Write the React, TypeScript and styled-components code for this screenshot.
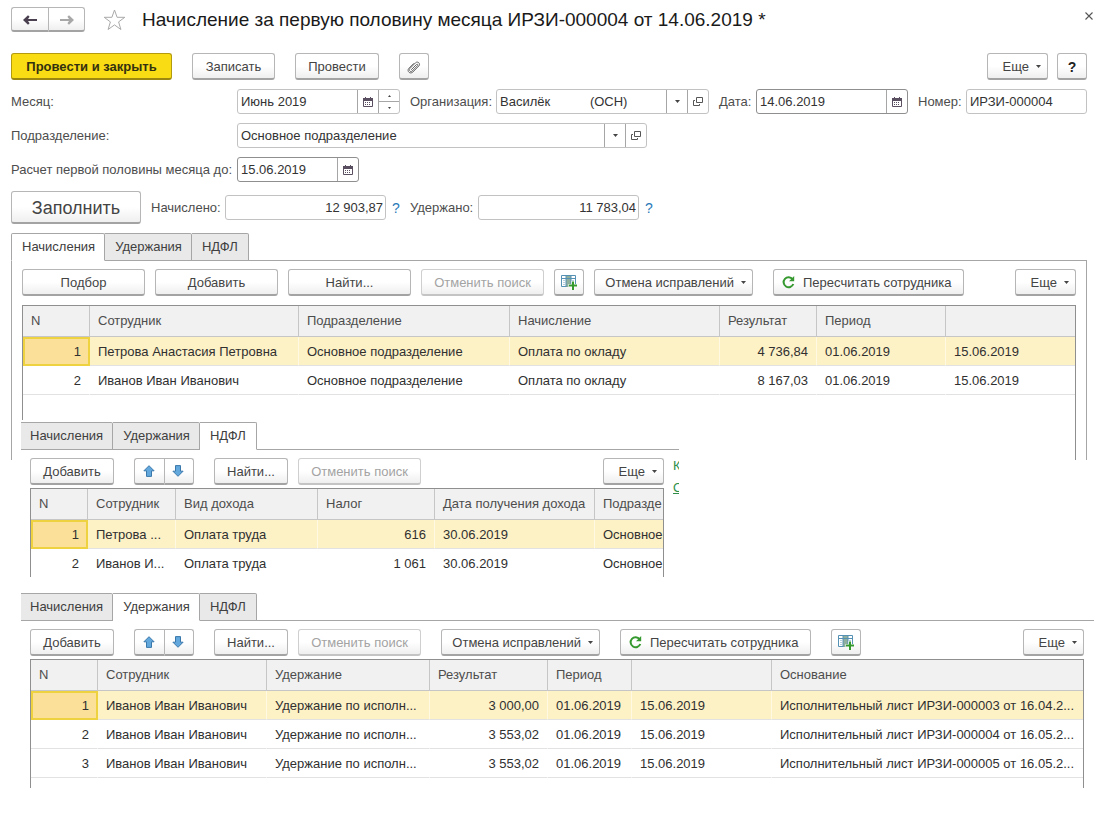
import React from "react";
import styled, { createGlobalStyle, css } from "styled-components";

const GlobalStyle = createGlobalStyle`
  *, *::before, *::after { box-sizing: border-box; }
  body {
    margin: 0;
    background: #fff;
    color: #404040;
    font: 13px/16px "Liberation Sans", Arial, sans-serif;
  }
  button, input { font: inherit; color: inherit; }
`;

const line = "#a6a6a6";

const Page = styled.main`
  padding-top: 7px;
`;

const Header = styled.header`
  display: flex;
  align-items: center;
  height: 25px;
  margin: 0 2px 21px 11px;
`;

const Title = styled.h1`
  margin: 0 auto 0 16px;
  font-size: 19px;
  line-height: 24px;
  font-weight: 400;
  color: #1a1a1a;
  white-space: nowrap;
`;

const PlainButton = styled.button`
  display: flex;
  align-items: center;
  justify-content: center;
  padding: 0;
  border: 0;
  background: none;
`;

const StarButton = styled(PlainButton)`
  margin-left: 18px;
`;

const CloseButton = styled(PlainButton)`
  align-self: flex-start;
  padding-top: 5px;
`;

const Button = styled.button<{ $width?: number; $tone?: "primary" | "large" }>`
  display: flex;
  align-items: center;
  justify-content: center;
  flex: none;
  width: ${(p) => (p.$width ? `${p.$width}px` : "auto")};
  height: 27px;
  padding: 1px 0 0;
  border: 1px solid #b6b6b6;
  border-bottom: 2px solid #a3a3a3;
  border-radius: 3px;
  background: linear-gradient(#fff 50%, #efefef);
  color: #444;
  white-space: nowrap;
  &:disabled {
    color: #a3a3a3;
    border-color: #cfcfcf;
    border-bottom-color: #c4c4c4;
  }
  ${(p) =>
    p.$tone === "primary" &&
    css`
      background: #f9dc14;
      border-color: #b39b10;
      border-bottom-color: #9c8710;
      color: #33300f;
      font-weight: 700;
    `}
  ${(p) =>
    p.$tone === "large" &&
    css`
      height: 33px;
      font-size: 18px;
    `}
`;

const HelpButton = styled(Button)`
  font-weight: 700;
  font-size: 14px;
  color: #222;
`;

const MenuButton = styled(Button)`
  justify-content: flex-end;
  gap: 7px;
  padding-right: 6px;
`;

const IconTextButton = styled(Button)`
  justify-content: flex-start;
  gap: 8px;
  padding-left: 8px;
`;

const ButtonPair = styled.div`
  display: flex;
  button:first-child {
    border-radius: 3px 0 0 3px;
    border-right-width: 0;
  }
  button:last-child {
    border-radius: 0 3px 3px 0;
  }
`;

const NavPair = styled(ButtonPair)`
  button { height: 25px; }
`;

const MovePair = styled(ButtonPair)`
  button { padding: 0 2px 0 0; }
`;

const Form = styled.form`
  display: flex;
  flex-direction: column;
  gap: 9px;
  margin: 0 8px 9px 11px;
`;

const Row = styled.div`
  display: flex;
  align-items: center;
`;

const Bar = styled.div`
  display: flex;
  gap: 20px;
`;

const Group = styled.div<{ $end?: boolean }>`
  display: flex;
  gap: ${(p) => (p.$end ? 9 : 10)}px;
  margin-left: ${(p) => (p.$end ? "auto" : "0")};
`;

const Label = styled.label<{ $width: number; $gap?: boolean }>`
  flex: none;
  width: ${(p) => p.$width}px;
  margin-left: ${(p) => (p.$gap ? 10 : 0)}px;
  color: #4d4d4d;
  white-space: nowrap;
`;

const Field = styled.div<{ $width?: number; $strong?: boolean }>`
  display: flex;
  flex: ${(p) => (p.$width ? "none" : "1")};
  width: ${(p) => (p.$width ? `${p.$width}px` : "auto")};
  min-width: 0;
  height: 25px;
  border: 1px solid ${(p) => (p.$strong ? "#8f8f8f" : "#c2c2c2")};
  border-radius: 3px;
  background: #fff;
`;

const Input = styled.input<{ $right?: boolean }>`
  flex: 1;
  min-width: 0;
  padding: 0 2px 0 3px;
  border: 0;
  border-radius: 3px;
  outline: 0;
  background: transparent;
  color: #333;
  text-align: ${(p) => (p.$right ? "right" : "left")};
`;

const FieldButton = styled(PlainButton)`
  flex: none;
  width: 21px;
  border-left: 1px solid ${line};
`;

const Spinner = styled.div`
  display: flex;
  flex-direction: column;
  width: 21px;
  border-left: 1px solid ${line};
  button {
    flex: 1;
  }
  button:first-child {
    border-bottom: 1px solid ${line};
  }
`;

const Hint = styled.a`
  width: 24px;
  padding-left: 6px;
  color: #2a7ab8;
  font-size: 14px;
  text-decoration: none;
`;

const Tabs = styled.div`
  display: flex;
  height: 28px;
  &::after {
    content: "";
    flex: 1;
    border-bottom: 1px solid ${line};
  }
`;

const Tab = styled.button<{ $active: boolean; $open: boolean }>`
  padding: 0 9px 0 10px;
  border: 1px solid ${line};
  border-left-width: 0;
  border-radius: 0 2px 0 0;
  background: #e9e9e9;
  color: #404040;
  &:first-child {
    padding-left: ${(p) => (p.$open ? 9 : 10)}px;
    border-left-width: ${(p) => (p.$open ? 0 : 1)}px;
    border-radius: ${(p) => (p.$open ? "0 2px 0 0" : "2px 2px 0 0")};
  }
  &:last-child {
    padding-right: 10px;
  }
  ${(p) =>
    p.$active &&
    css`
      background: #fff;
      border-bottom-color: #fff;
    `}
`;

const AccrualSection = styled.section`
  margin: 0 8px 0 11px;
`;

const AccrualPanel = styled.div`
  display: flex;
  flex-direction: column;
  gap: 9px;
  min-height: 199px;
  padding: 8px 10px 0;
  border: solid ${line};
  border-width: 0 1px;
`;

/* The tax fragment is laid over the lower left part of the accruals panel. */
const TaxSection = styled.section`
  position: relative;
  width: 658px;
  max-width: 100%;
  margin: -40px 0 16px 21px;
  padding-top: 2px;
  background: #fff;
`;

const TaxBody = styled.div`
  display: flex;
  gap: 9px;
  padding: 8px 0 0 9px;
`;

const Stack = styled.div`
  display: flex;
  flex: 1;
  flex-direction: column;
  gap: 3px;
  min-width: 0;
`;

const SideLinks = styled.nav`
  display: flex;
  flex: none;
  flex-direction: column;
  gap: 6px;
  width: 6px;
  overflow: hidden;
  a {
    color: #2f8f4a;
    text-decoration: none;
  }
  a:last-child {
    text-decoration: underline;
  }
`;

const DeductionSection = styled.section`
  margin: 0 1px 29px 21px;
`;

const DeductionBody = styled(Stack)`
  padding: 8px 10px 0 9px;
`;

const TableFrame = styled.div<{ $tail: number }>`
  flex: 1;
  padding-bottom: ${(p) => p.$tail}px;
  border: solid #8f8f8f;
  border-width: 1px 1px 0;
`;

const Table = styled.table<{ $cropped?: boolean }>`
  width: 100%;
  table-layout: fixed;
  border-collapse: separate;
  border-spacing: 0;
  th, td {
    padding: 0 8px;
    overflow: hidden;
    font-weight: 400;
    text-align: left;
    white-space: nowrap;
  }
  th {
    height: 31px;
    border: solid #c6c6c6;
    border-width: 0 1px 1px 0;
    background: #f1f1f1;
    color: #4d4d4d;
  }
  td {
    height: 29px;
    padding-top: 1px;
    border: solid transparent;
    border-width: 0 1px 1px 0;
    border-bottom-color: #e2e2e2;
    color: #303030;
  }
  th:last-child, td:last-child {
    padding-right: 0;
    border-right: 0;
  }
  ${(p) =>
    p.$cropped &&
    css`
      tr:last-child td {
        height: 28px;
        border-bottom: 0;
      }
    `}
`;

const BodyRow = styled.tr<{ $selected: boolean }>`
  ${(p) =>
    p.$selected &&
    css`
      td {
        background: #fdf1c6;
        border-right-color: #fff8e2;
      }
      td:first-child {
        padding: 0 7px 0 6px;
        border: 2px solid #efd240;
        background: #fbe09a;
      }
    `}
`;

const Cell = styled.td<{ $right?: boolean }>`
  && {
    text-align: ${(p) => (p.$right ? "right" : "left")};
  }
`;

/* Icons */

const Caret = () => (
  <svg width="5" height="3" viewBox="0 0 5 3" aria-hidden="true">
    <path d="M0 0h5L2.500 3z" fill="#444" />
  </svg>
);

const ArrowIcon = ({ color, flip }: { color: string; flip?: boolean }) => (
  <svg width="14" height="10" viewBox="0 0 14 10" aria-hidden="true">
    <path
      d={
        flip
          ? "M14 5L9 .3 7.400 1.800 9 4H0v2h9L7.400 8.200 9 9.700z"
          : "M0 5L5 .3l1.600 1.500L5 4h9v2H5l1.600 2.200L5 9.700z"
      }
      fill={color}
    />
  </svg>
);

const StarIcon = () => (
  <svg width="23" height="22" viewBox="0 0 23 22" aria-hidden="true">
    <path
      d="M11.500 1l2.600 7.300h7.700l-6.200 4.600 2.300 7.600-6.400-4.600-6.400 4.600 2.300-7.600L1.200 8.300h7.700z"
      fill="#fff"
      stroke="#a9a9a9"
    />
  </svg>
);

const CloseIcon = () => (
  <svg width="8" height="8" viewBox="0 0 8 8" aria-hidden="true">
    <path d="M.5.5l7 7M7.500.5l-7 7" stroke="#555" strokeWidth="1.100" />
  </svg>
);

const ClipIcon = () => (
  <svg width="14" height="14" viewBox="0 0 14 14" aria-hidden="true">
    <path
      d="M4.200 9.800l5.300-5.300c.8-.8 1.900.2 1.100 1.100L5.200 11c-1.500 1.500-4-.6-2.400-2.400l5.700-5.800C10.700.7 14 3.700 11.800 6l-5.900 6c-2.600 2.600-6.600-.8-4-3.700l5-5"
      fill="none"
      stroke="#666"
    />
  </svg>
);

const CalendarIcon = () => (
  <svg width="10" height="10" viewBox="0 0 10 10" aria-hidden="true">
    <path d="M.5 2.500h9v7h-9z" fill="#fff" stroke="#5a4f60" />
    <path d="M0 1h10v3H0zM2 0h1v1H2zM7 0h1v1H7z" fill="#5a4f60" />
    <path d="M2 5.500h6M2 7.500h6" stroke="#5a4f60" strokeDasharray="1 1" />
  </svg>
);

const OpenIcon = () => (
  <svg width="10" height="9" viewBox="0 0 10 9" aria-hidden="true">
    <path d="M3.500.5h6v5h-6zM2 3.500H.5v5h6V7" fill="none" stroke="#555" />
  </svg>
);

const SpinIcon = ({ down }: { down?: boolean }) => (
  <svg width="3" height="2" viewBox="0 0 3 2" aria-hidden="true">
    <path d={down ? "M0 0h3L1.500 2z" : "M0 2h3L1.500 0z"} fill="#444" />
  </svg>
);

const MoveIcon = ({ down }: { down?: boolean }) => (
  <svg width="12" height="12" viewBox="0 0 12 12" aria-hidden="true">
    <path
      d={
        down
          ? "M6 11.300L.9 6.200h2.600V.6h5v5.600h2.600z"
          : "M6 .7l5.100 5.100H8.500v5.600h-5V5.800H.9z"
      }
      fill="#62a8dc"
      stroke="#3a78ab"
    />
  </svg>
);

const ColumnsIcon = () => (
  <svg width="16" height="15" viewBox="0 0 16 15" aria-hidden="true">
    <path d="M.5.5h14v11H.5z" fill="#fff" stroke="#5591b5" />
    <path d="M5 1h5v11H5z" fill="#8fae9c" />
    <path d="M0 3.500h15M5 0v12M10 0v12" fill="none" stroke="#5591b5" />
    <path d="M2 5.500h2M2 7.500h2M2 9.500h2M11 5.500h2" stroke="#b8cfdd" />
    <path d="M12 6v9M7.500 10.500H16" stroke="#fff" strokeWidth="3" />
    <path d="M12 6.500V15M8 10.500h8" stroke="#35992f" strokeWidth="2" />
  </svg>
);

const RefreshIcon = () => (
  <svg width="13" height="13" viewBox="0 0 13 13" aria-hidden="true">
    <path
      d="M10.600 3.200A5 5 0 1 0 11.300 8"
      fill="none"
      stroke="#35992f"
      strokeWidth="2"
    />
    <path d="M12.200 0v5.200H7z" fill="#35992f" />
  </svg>
);

/* Parts */

const MoreButton = () => (
  <MenuButton type="button" $width={61}>
    <span>Еще</span>
    <Caret />
  </MenuButton>
);

const CorrectionsButton = () => (
  <MenuButton type="button" $width={159}>
    <span>Отмена исправлений</span>
    <Caret />
  </MenuButton>
);

const RecalcButton = () => (
  <IconTextButton type="button" $width={191}>
    <RefreshIcon />
    <span>Пересчитать сотрудника</span>
  </IconTextButton>
);

const ColumnsButton = () => (
  <Button type="button" $width={30} aria-label="Добавить колонку">
    <ColumnsIcon />
  </Button>
);

const MoveButtons = () => (
  <MovePair>
    <Button type="button" $width={30} aria-label="Переместить вверх">
      <MoveIcon />
    </Button>
    <Button type="button" $width={30} aria-label="Переместить вниз">
      <MoveIcon down />
    </Button>
  </MovePair>
);

const TabBar = ({ active, open = false }: { active: number; open?: boolean }) => (
  <Tabs role="tablist">
    {["Начисления", "Удержания", "НДФЛ"].map((name, i) => (
      <Tab
        key={name}
        type="button"
        role="tab"
        aria-selected={i === active}
        $active={i === active}
        $open={open}
      >
        {name}
      </Tab>
    ))}
  </Tabs>
);

type Column = { title: string; width?: number; right?: boolean };

type GridProps = {
  columns: Column[];
  rows: string[][];
  tail?: number;
  cropped?: boolean;
};

const DataGrid = ({ columns, rows, tail = 0, cropped }: GridProps) => (
  <TableFrame $tail={tail}>
    <Table $cropped={cropped}>
      <colgroup>
        {columns.map((c, i) => (
          <col key={i} width={c.width} />
        ))}
      </colgroup>
      <thead>
        <tr>
          {columns.map((c, i) => (
            <th key={i} scope="col">{c.title}</th>
          ))}
        </tr>
      </thead>
      <tbody>
        {rows.map((row, r) => (
          <BodyRow key={r} $selected={r === 0}>
            {row.map((text, i) => (
              <Cell key={i} $right={columns[i].right}>{text}</Cell>
            ))}
          </BodyRow>
        ))}
      </tbody>
    </Table>
  </TableFrame>
);

const accrualColumns: Column[] = [
  { title: "N", width: 67, right: true },
  { title: "Сотрудник", width: 209 },
  { title: "Подразделение", width: 211 },
  { title: "Начисление", width: 210 },
  { title: "Результат", width: 97, right: true },
  { title: "Период", width: 129 },
  { title: "" },
];

const accrualRows = [
  ["1", "Петрова Анастасия Петровна", "Основное подразделение", "Оплата по окладу", "4 736,84", "01.06.2019", "15.06.2019"],
  ["2", "Иванов Иван Иванович", "Основное подразделение", "Оплата по окладу", "8 167,03", "01.06.2019", "15.06.2019"],
];

const taxColumns: Column[] = [
  { title: "N", width: 57, right: true },
  { title: "Сотрудник", width: 88 },
  { title: "Вид дохода", width: 142 },
  { title: "Налог", width: 117, right: true },
  { title: "Дата получения дохода", width: 160 },
  { title: "Подразде" },
];

const taxRows = [
  ["1", "Петрова ...", "Оплата труда", "616", "30.06.2019", "Основное"],
  ["2", "Иванов И...", "Оплата труда", "1 061", "30.06.2019", "Основное"],
];

const deductionColumns: Column[] = [
  { title: "N", width: 67, right: true },
  { title: "Сотрудник", width: 169 },
  { title: "Удержание", width: 163 },
  { title: "Результат", width: 118, right: true },
  { title: "Период", width: 84 },
  { title: "", width: 140 },
  { title: "Основание" },
];

const deductionRows = [
  ["1", "Иванов Иван Иванович", "Удержание по исполн...", "3 000,00", "01.06.2019", "15.06.2019", "Исполнительный лист ИРЗИ-000003 от 16.04.2..."],
  ["2", "Иванов Иван Иванович", "Удержание по исполн...", "3 553,02", "01.06.2019", "15.06.2019", "Исполнительный лист ИРЗИ-000004 от 16.05.2..."],
  ["3", "Иванов Иван Иванович", "Удержание по исполн...", "3 553,02", "01.06.2019", "15.06.2019", "Исполнительный лист ИРЗИ-000005 от 16.05.2..."],
];

export default function App() {
  return (
    <>
      <GlobalStyle />
      <Page>
        <Header>
          <NavPair>
            <Button type="button" $width={37} aria-label="Назад">
              <ArrowIcon color="#4a4050" />
            </Button>
            <Button type="button" $width={37} aria-label="Вперед">
              <ArrowIcon color="#a8a8a8" flip />
            </Button>
          </NavPair>
          <StarButton type="button" aria-label="В избранное">
            <StarIcon />
          </StarButton>
          <Title>Начисление за первую половину месяца ИРЗИ-000004 от 14.06.2019 *</Title>
          <CloseButton type="button" aria-label="Закрыть">
            <CloseIcon />
          </CloseButton>
        </Header>

        <Form onSubmit={(e) => e.preventDefault()}>
          <Bar>
            <Button type="submit" $width={161} $tone="primary">Провести и закрыть</Button>
            <Button type="button" $width={83}>Записать</Button>
            <Button type="button" $width={84}>Провести</Button>
            <Button type="button" $width={30} aria-label="Присоединенные файлы">
              <ClipIcon />
            </Button>
            <Group $end>
              <MoreButton />
              <HelpButton type="button" $width={30}>?</HelpButton>
            </Group>
          </Bar>

          <Row>
            <Label htmlFor="month" $width={226}>Месяц:</Label>
            <Field $width={163}>
              <Input id="month" defaultValue="Июнь 2019" />
              <FieldButton type="button" aria-label="Выбрать месяц"><CalendarIcon /></FieldButton>
              <Spinner>
                <PlainButton type="button" aria-label="Следующий месяц"><SpinIcon /></PlainButton>
                <PlainButton type="button" aria-label="Предыдущий месяц"><SpinIcon down /></PlainButton>
              </Spinner>
            </Field>
            <Label htmlFor="company" $width={86} $gap>Организация:</Label>
            <Field $width={213}>
              <Input id="company" defaultValue="Василёк           (ОСН)" />
              <FieldButton type="button" aria-label="Выбрать организацию"><Caret /></FieldButton>
              <FieldButton type="button" aria-label="Открыть организацию"><OpenIcon /></FieldButton>
            </Field>
            <Label htmlFor="date" $width={37} $gap>Дата:</Label>
            <Field $width={152} $strong>
              <Input id="date" defaultValue="14.06.2019" />
              <FieldButton type="button" aria-label="Выбрать дату"><CalendarIcon /></FieldButton>
            </Field>
            <Label htmlFor="number" $width={48} $gap>Номер:</Label>
            <Field>
              <Input id="number" defaultValue="ИРЗИ-000004" />
            </Field>
          </Row>

          <Row>
            <Label htmlFor="department" $width={226}>Подразделение:</Label>
            <Field $width={410}>
              <Input id="department" defaultValue="Основное подразделение" />
              <FieldButton type="button" aria-label="Выбрать подразделение"><Caret /></FieldButton>
              <FieldButton type="button" aria-label="Открыть подразделение"><OpenIcon /></FieldButton>
            </Field>
          </Row>

          <Row>
            <Label htmlFor="until" $width={226}>Расчет первой половины месяца до:</Label>
            <Field $width={122} $strong>
              <Input id="until" defaultValue="15.06.2019" />
              <FieldButton type="button" aria-label="Выбрать дату расчета"><CalendarIcon /></FieldButton>
            </Field>
          </Row>

          <Row>
            <Button type="button" $width={130} $tone="large">Заполнить</Button>
            <Label htmlFor="accrued" $width={74} $gap>Начислено:</Label>
            <Field $width={161}>
              <Input id="accrued" defaultValue="12 903,87" $right />
            </Field>
            <Hint href="#accrued">?</Hint>
            <Label htmlFor="withheld" $width={68}>Удержано:</Label>
            <Field $width={161}>
              <Input id="withheld" defaultValue="11 783,04" $right />
            </Field>
            <Hint href="#withheld">?</Hint>
          </Row>
        </Form>

        <AccrualSection>
          <TabBar active={0} />
          <AccrualPanel>
            <Bar>
              <Group>
                <Button type="button" $width={123}>Подбор</Button>
                <Button type="button" $width={123}>Добавить</Button>
                <Button type="button" $width={123}>Найти...</Button>
                <Button type="button" $width={123} disabled>Отменить поиск</Button>
                <ColumnsButton />
                <CorrectionsButton />
              </Group>
              <RecalcButton />
              <Group $end>
                <MoreButton />
              </Group>
            </Bar>
            <DataGrid columns={accrualColumns} rows={accrualRows} />
          </AccrualPanel>
        </AccrualSection>

        <TaxSection>
          <TabBar active={2} open />
          <TaxBody>
            <Stack>
              <Bar>
                <Button type="button" $width={84}>Добавить</Button>
                <MoveButtons />
                <Group>
                  <Button type="button" $width={74}>Найти...</Button>
                  <Button type="button" $width={123} disabled>Отменить поиск</Button>
                </Group>
                <Group $end>
                  <MoreButton />
                </Group>
              </Bar>
              <DataGrid columns={taxColumns} rows={taxRows} cropped />
            </Stack>
            <SideLinks>
              <a href="#k">К</a>
              <a href="#o">О</a>
            </SideLinks>
          </TaxBody>
        </TaxSection>

        <DeductionSection>
          <TabBar active={1} open />
          <DeductionBody>
            <Bar>
              <Button type="button" $width={84}>Добавить</Button>
              <MoveButtons />
              <Group>
                <Button type="button" $width={74}>Найти...</Button>
                <Button type="button" $width={123} disabled>Отменить поиск</Button>
              </Group>
              <CorrectionsButton />
              <RecalcButton />
              <ColumnsButton />
              <Group $end>
                <MoreButton />
              </Group>
            </Bar>
            <DataGrid columns={deductionColumns} rows={deductionRows} tail={10} />
          </DeductionBody>
        </DeductionSection>
      </Page>
    </>
  );
}
